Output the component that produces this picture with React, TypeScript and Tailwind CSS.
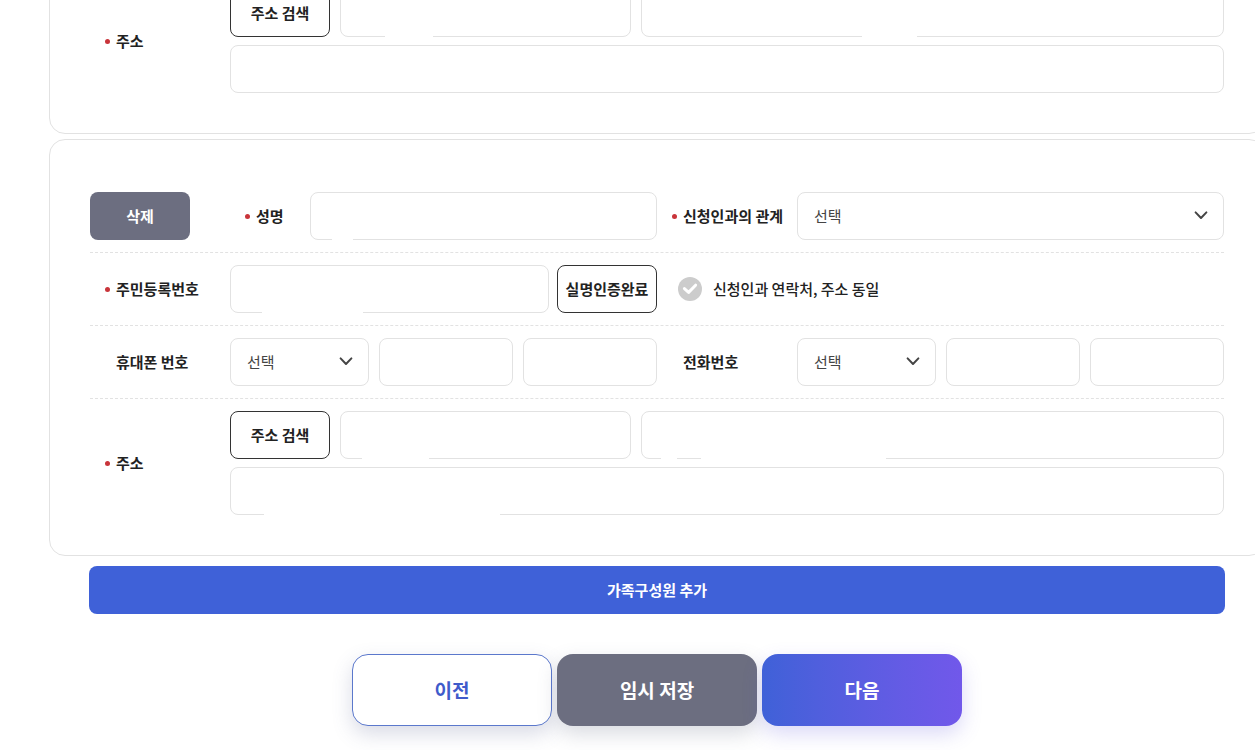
import { useId, type InputHTMLAttributes, type ReactNode } from "react";

const FieldLabel = ({
  htmlFor,
  required = false,
  className = "w-[140px]",
  children,
}: {
  htmlFor: string;
  required?: boolean;
  className?: string;
  children: ReactNode;
}) => (
  <label
    htmlFor={htmlFor}
    className={`flex shrink-0 items-center gap-1.5 pl-[15px] font-bold whitespace-nowrap ${className}`}
  >
    <span className={`h-[5px] w-[5px] rounded-full ${required ? "bg-[#c9343a]" : ""}`} />
    {children}
  </label>
);

// masks: white strips that hide part of the field's lower edge
const TextField = ({
  className = "flex-1",
  masks = [],
  ...props
}: InputHTMLAttributes<HTMLInputElement> & { masks?: string[] }) => (
  <div className={`relative min-w-0 ${className}`}>
    <input
      type="text"
      className="block h-12 w-full rounded-lg border border-[#e2e2e2] bg-white px-4 outline-none focus:border-[#3f61d8]"
      {...props}
    />
    {masks.map((mask) => (
      <span key={mask} className={`pointer-events-none absolute bottom-0 h-2 bg-white ${mask}`} />
    ))}
  </div>
);

const SelectField = ({
  id,
  options,
  className = "flex-1",
}: {
  id: string;
  options: string[];
  className?: string;
}) => (
  <div className={`relative ${className}`}>
    <select
      id={id}
      className="block h-12 w-full appearance-none rounded-lg border border-[#e2e2e2] bg-white px-4 text-[#444444] outline-none"
    >
      <option>선택</option>
      {options.map((option) => (
        <option key={option}>{option}</option>
      ))}
    </select>
    <svg
      viewBox="0 0 14 10"
      className="pointer-events-none absolute top-[18px] right-4 h-[10px] w-[14px]"
      fill="none"
      stroke="#444444"
      strokeWidth="2"
      strokeLinecap="round"
      strokeLinejoin="round"
    >
      <path d="M1.6 2.4 7 8 12.4 2.4" />
    </svg>
  </div>
);

const OutlineButton = ({ children }: { children: ReactNode }) => (
  <button
    type="button"
    className="h-12 w-[100px] shrink-0 rounded-lg border border-[#333333] bg-white font-bold whitespace-nowrap"
  >
    {children}
  </button>
);

const Card = ({ children }: { children: ReactNode }) => (
  <section className="-mx-10 rounded-2xl border border-[#e2e2e2] bg-white p-10">{children}</section>
);

const AddressRow = ({
  zipMasks,
  roadMasks,
  detailMasks,
}: {
  zipMasks?: string[];
  roadMasks?: string[];
  detailMasks?: string[];
}) => {
  const id = useId();
  return (
    <div className="flex pt-3">
      <FieldLabel htmlFor={id} required>
        주소
      </FieldLabel>
      <div className="flex flex-1 flex-col gap-2">
        <div className="flex gap-2.5">
          <OutlineButton>주소 검색</OutlineButton>
          <TextField id={id} masks={zipMasks} />
          <TextField className="flex-2" aria-label="도로명 주소" masks={roadMasks} />
        </div>
        <TextField className="w-full" aria-label="상세 주소" masks={detailMasks} />
      </div>
    </div>
  );
};

const PhoneFields = ({ label, prefixes }: { label: string; prefixes: string[] }) => {
  const id = useId();
  return (
    <div className="flex">
      <FieldLabel htmlFor={id}>{label}</FieldLabel>
      <div className="flex min-w-0 flex-1 gap-2.5">
        <SelectField id={id} options={prefixes} className="w-[139px] shrink-0" />
        <TextField aria-label={`${label} 가운데 자리`} />
        <TextField aria-label={`${label} 끝자리`} />
      </div>
    </div>
  );
};

const rowClass = "grid grid-cols-2 border-b border-dashed border-[#e2e2e2] py-3";

const FamilyMemberCard = () => (
  <Card>
    <div className={rowClass}>
      <div className="flex">
        <button
          type="button"
          className="mr-10 h-12 w-[100px] shrink-0 rounded-lg bg-[#6c6e80] font-bold text-white"
        >
          삭제
        </button>
        <FieldLabel htmlFor="name" required className="w-20">
          성명
        </FieldLabel>
        <TextField id="name" masks={["left-[22px] w-[21px]"]} />
      </div>
      <div className="flex">
        <FieldLabel htmlFor="relation" required>
          신청인과의 관계
        </FieldLabel>
        <SelectField id="relation" options={["배우자", "자녀", "부모"]} />
      </div>
    </div>

    <div className={rowClass}>
      <div className="flex">
        <FieldLabel htmlFor="rrn" required>
          주민등록번호
        </FieldLabel>
        <div className="flex min-w-0 flex-1 gap-2">
          <TextField id="rrn" masks={["left-8 w-[101px]"]} />
          <OutlineButton>실명인증완료</OutlineButton>
        </div>
      </div>
      <label className="flex items-center gap-[11px] pl-[21px] font-medium">
        <span className="relative h-6 w-6">
          <input
            type="checkbox"
            className="block h-6 w-6 appearance-none rounded-full bg-[#cccccc] checked:bg-[#3f61d8]"
          />
          <svg
            viewBox="0 0 24 24"
            className="pointer-events-none absolute inset-0 h-6 w-6"
            fill="none"
            stroke="#ffffff"
            strokeWidth="3"
            strokeLinecap="round"
            strokeLinejoin="round"
          >
            <path d="M6.4 11.6 10.6 15.4 17.6 8.2" />
          </svg>
        </span>
        신청인과 연락처, 주소 동일
      </label>
    </div>

    <div className={rowClass}>
      <PhoneFields label="휴대폰 번호" prefixes={["010", "011", "016"]} />
      <PhoneFields label="전화번호" prefixes={["02", "031", "032"]} />
    </div>

    <AddressRow
      zipMasks={["left-[22px] w-[67px]"]}
      roadMasks={["left-5 w-[16px]", "left-[60px] w-[185px]"]}
      detailMasks={["left-[34px] w-[236px]"]}
    />
  </Card>
);

const navButton = "h-[72px] w-[200px] rounded-2xl text-[19px] font-bold";

export default function App() {
  return (
    <div className="overflow-hidden bg-white pr-[30px] pb-6 pl-[89px] font-['Noto_Sans_CJK_KR',sans-serif] text-[15px] leading-6 text-[#222222]">
      <form className="-mt-16" onSubmit={(e) => e.preventDefault()}>
        <div className="flex flex-col gap-[5px]">
          <Card>
            <AddressRow zipMasks={["left-[45px] w-[48px]"]} roadMasks={["left-[221px] w-[55px]"]} />
          </Card>
          <FamilyMemberCard />
        </div>

        <button type="button" className="mt-2.5 h-12 w-full rounded-lg bg-[#3f61d8] font-bold text-white">
          가족구성원 추가
        </button>

        <div className="mt-10 flex justify-center gap-[5px]">
          <button
            type="button"
            className={`${navButton} border border-[#5b78cc] bg-white text-[#3f5bcb] shadow-[0_8px_20px_rgba(80,90,140,0.22)]`}
          >
            이전
          </button>
          <button
            type="button"
            className={`${navButton} bg-[#6c6e80] text-white shadow-[0_8px_20px_rgba(80,90,120,0.22)]`}
          >
            임시 저장
          </button>
          <button
            type="submit"
            className={`${navButton} bg-linear-to-r from-[#3f61d8] to-[#7158ea] text-white shadow-[0_8px_20px_rgba(90,80,220,0.22)]`}
          >
            다음
          </button>
        </div>
      </form>
    </div>
  );
}
